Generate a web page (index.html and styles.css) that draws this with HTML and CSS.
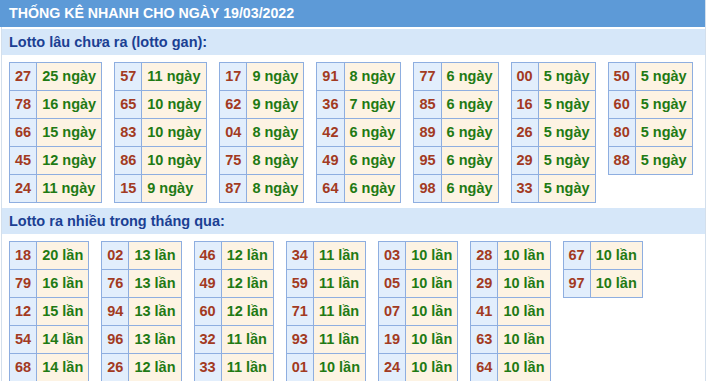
FILE: index.html
```html
<!DOCTYPE html>
<html lang="vi">
<head>
<meta charset="utf-8">
<title>Thống kê nhanh</title>
<link rel="stylesheet" href="styles.css">
</head>
<body>
<div class="box">
  <div class="title">THỐNG KÊ NHANH CHO NGÀY 19/03/2022</div>

  <div class="sub">Lotto lâu chưa ra (lotto gan):</div>
  <div class="group">
    <table class="tk"><tr><td class="n">27</td><td class="v">25 ngày</td></tr><tr><td class="n">78</td><td class="v">16 ngày</td></tr><tr><td class="n">66</td><td class="v">15 ngày</td></tr><tr><td class="n">45</td><td class="v">12 ngày</td></tr><tr><td class="n">24</td><td class="v">11 ngày</td></tr></table>
    <table class="tk"><tr><td class="n">57</td><td class="v">11 ngày</td></tr><tr><td class="n">65</td><td class="v">10 ngày</td></tr><tr><td class="n">83</td><td class="v">10 ngày</td></tr><tr><td class="n">86</td><td class="v">10 ngày</td></tr><tr><td class="n">15</td><td class="v">9 ngày</td></tr></table>
    <table class="tk"><tr><td class="n">17</td><td class="v">9 ngày</td></tr><tr><td class="n">62</td><td class="v">9 ngày</td></tr><tr><td class="n">04</td><td class="v">8 ngày</td></tr><tr><td class="n">75</td><td class="v">8 ngày</td></tr><tr><td class="n">87</td><td class="v">8 ngày</td></tr></table>
    <table class="tk"><tr><td class="n">91</td><td class="v">8 ngày</td></tr><tr><td class="n">36</td><td class="v">7 ngày</td></tr><tr><td class="n">42</td><td class="v">6 ngày</td></tr><tr><td class="n">49</td><td class="v">6 ngày</td></tr><tr><td class="n">64</td><td class="v">6 ngày</td></tr></table>
    <table class="tk"><tr><td class="n">77</td><td class="v">6 ngày</td></tr><tr><td class="n">85</td><td class="v">6 ngày</td></tr><tr><td class="n">89</td><td class="v">6 ngày</td></tr><tr><td class="n">95</td><td class="v">6 ngày</td></tr><tr><td class="n">98</td><td class="v">6 ngày</td></tr></table>
    <table class="tk"><tr><td class="n">00</td><td class="v">5 ngày</td></tr><tr><td class="n">16</td><td class="v">5 ngày</td></tr><tr><td class="n">26</td><td class="v">5 ngày</td></tr><tr><td class="n">29</td><td class="v">5 ngày</td></tr><tr><td class="n">33</td><td class="v">5 ngày</td></tr></table>
    <table class="tk"><tr><td class="n">50</td><td class="v">5 ngày</td></tr><tr><td class="n">60</td><td class="v">5 ngày</td></tr><tr><td class="n">80</td><td class="v">5 ngày</td></tr><tr><td class="n">88</td><td class="v">5 ngày</td></tr></table>
  </div>

  <div class="sub">Lotto ra nhiều trong tháng qua:</div>
  <div class="group">
    <table class="tk"><tr><td class="n">18</td><td class="v">20 lần</td></tr><tr><td class="n">79</td><td class="v">16 lần</td></tr><tr><td class="n">12</td><td class="v">15 lần</td></tr><tr><td class="n">54</td><td class="v">14 lần</td></tr><tr><td class="n">68</td><td class="v">14 lần</td></tr></table>
    <table class="tk"><tr><td class="n">02</td><td class="v">13 lần</td></tr><tr><td class="n">76</td><td class="v">13 lần</td></tr><tr><td class="n">94</td><td class="v">13 lần</td></tr><tr><td class="n">96</td><td class="v">13 lần</td></tr><tr><td class="n">26</td><td class="v">12 lần</td></tr></table>
    <table class="tk"><tr><td class="n">46</td><td class="v">12 lần</td></tr><tr><td class="n">49</td><td class="v">12 lần</td></tr><tr><td class="n">60</td><td class="v">12 lần</td></tr><tr><td class="n">32</td><td class="v">11 lần</td></tr><tr><td class="n">33</td><td class="v">11 lần</td></tr></table>
    <table class="tk"><tr><td class="n">34</td><td class="v">11 lần</td></tr><tr><td class="n">59</td><td class="v">11 lần</td></tr><tr><td class="n">71</td><td class="v">11 lần</td></tr><tr><td class="n">93</td><td class="v">11 lần</td></tr><tr><td class="n">01</td><td class="v">10 lần</td></tr></table>
    <table class="tk"><tr><td class="n">03</td><td class="v">10 lần</td></tr><tr><td class="n">05</td><td class="v">10 lần</td></tr><tr><td class="n">07</td><td class="v">10 lần</td></tr><tr><td class="n">19</td><td class="v">10 lần</td></tr><tr><td class="n">24</td><td class="v">10 lần</td></tr></table>
    <table class="tk"><tr><td class="n">28</td><td class="v">10 lần</td></tr><tr><td class="n">29</td><td class="v">10 lần</td></tr><tr><td class="n">41</td><td class="v">10 lần</td></tr><tr><td class="n">63</td><td class="v">10 lần</td></tr><tr><td class="n">64</td><td class="v">10 lần</td></tr></table>
    <table class="tk"><tr><td class="n">67</td><td class="v">10 lần</td></tr><tr><td class="n">97</td><td class="v">10 lần</td></tr></table>
  </div>
</div>
</body>
</html>
```
FILE: styles.css
```css
html, body {
  margin: 0;
  padding: 0;
  background: #ffffff;
}
body {
  font-family: "Liberation Sans", Arial, sans-serif;
  font-size: 14px;
}
.box {
  margin: 0 1px;
  border-left: 1px solid #d3dfec;
  border-right: 1px solid #d3dfec;
  min-height: 381px;
  box-sizing: border-box;
}
.title {
  height: 27px;
  line-height: 27px;
  margin: 0 0 2px -2px;
  padding-left: 9px;
  background: #5d9ad7;
  color: #ffffff;
  font-weight: bold;
  font-size: 14.2px;
}
.sub {
  height: 26px;
  line-height: 26px;
  padding-left: 7px;
  background: #d6e7f9;
  color: #1b3f93;
  font-weight: bold;
  font-size: 14.5px;
}
.group {
  display: flex;
  flex-wrap: nowrap;
  align-items: flex-start;
  gap: 12px;
  padding: 7px 0 5px 7px;
}
.tk {
  border-collapse: collapse;
  flex: none;
}
.tk td {
  border: 1px solid #8eaee0;
  height: 27px;
  padding: 0 5px;
  font-weight: bold;
  font-size: 14.5px;
  line-height: 27px;
  white-space: nowrap;
  text-align: center;
}
.tk .n {
  background: #e2eefc;
  color: #a23a22;
  padding: 0 5px 0 5px;
}
.tk .v {
  background: #fdf3e3;
  color: #1f7a14;
  text-align: left;
  padding: 0 5px 0 5px;
}
```
